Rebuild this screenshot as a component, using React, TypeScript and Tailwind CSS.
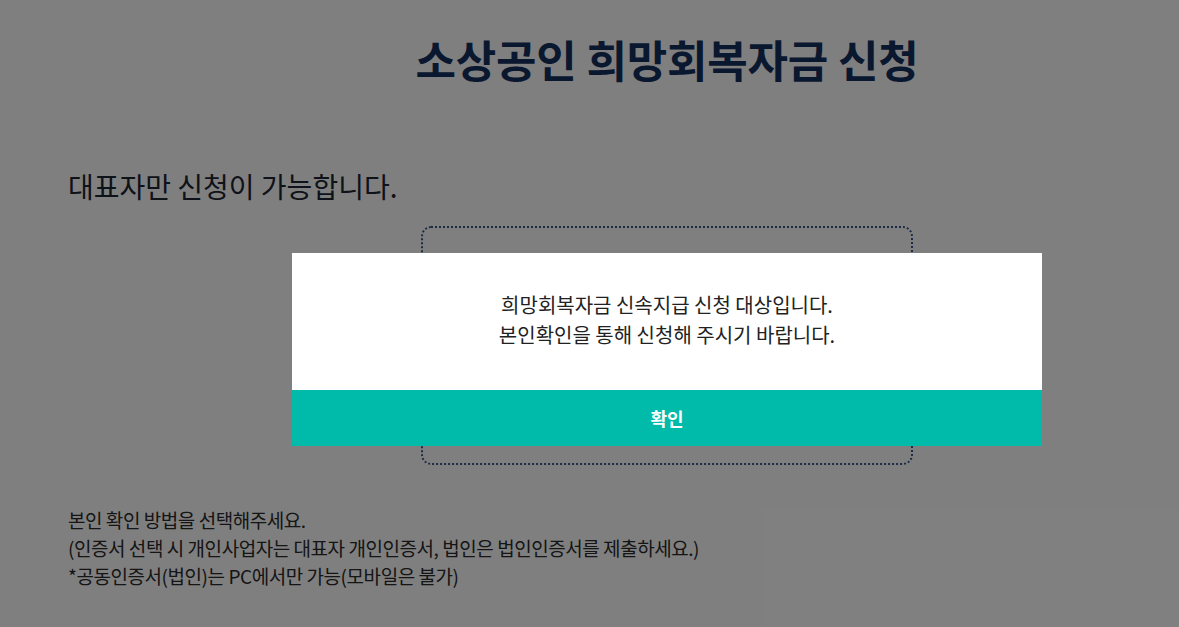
import React from "react";

export default function App() {
  const font = { fontFamily: '"Noto Sans CJK KR", "Noto Sans", sans-serif' };
  return (
    <div className="relative h-[627px] w-full overflow-hidden bg-white" style={font}>
      <div className="flex flex-col">
        <div className="pl-[155px] pt-[28px]">
          <h1 className="text-center text-[44px] font-bold leading-[62px] tracking-[-0.2px] text-[#14305e]">
            소상공인 희망회복자금 신청
          </h1>
        </div>
        <p className="mt-[76px] pl-[68px] text-[28px] leading-[40px] text-[#1c2433]">
          대표자만 신청이 가능합니다.
        </p>
        <div className="mt-[20px] flex pl-[155px] justify-center">
          <div className="h-[239px] w-[492px] rounded-[10px] border-2 border-dotted border-[#36558a]" />
        </div>
        <div className="mt-[41px] pl-[68px] text-[19px] leading-[28px] tracking-[-0.45px] text-[#2a2a2a]">
          <p>본인 확인 방법을 선택해주세요.</p>
          <p>(인증서 선택 시 개인사업자는 대표자 개인인증서, 법인은 법인인증서를 제출하세요.)</p>
          <p>*공동인증서(법인)는 PC에서만 가능(모바일은 불가)</p>
        </div>
      </div>

      <div className="absolute inset-0 bg-black/50" />

      <div className="absolute left-[292px] top-[253px] flex w-[750px] flex-col bg-white">
        <div className="flex h-[137px] flex-col items-center justify-center pb-[3px] text-[20px] leading-[30px] text-[#222222]">
          <p>희망회복자금 신속지급 신청 대상입니다.</p>
          <p>본인확인을 통해 신청해 주시기 바랍니다.</p>
        </div>
        <button className="flex h-[56px] items-center justify-center bg-[#00bbaa] text-[18px] font-bold text-white">
          확인
        </button>
      </div>
    </div>
  );
}
